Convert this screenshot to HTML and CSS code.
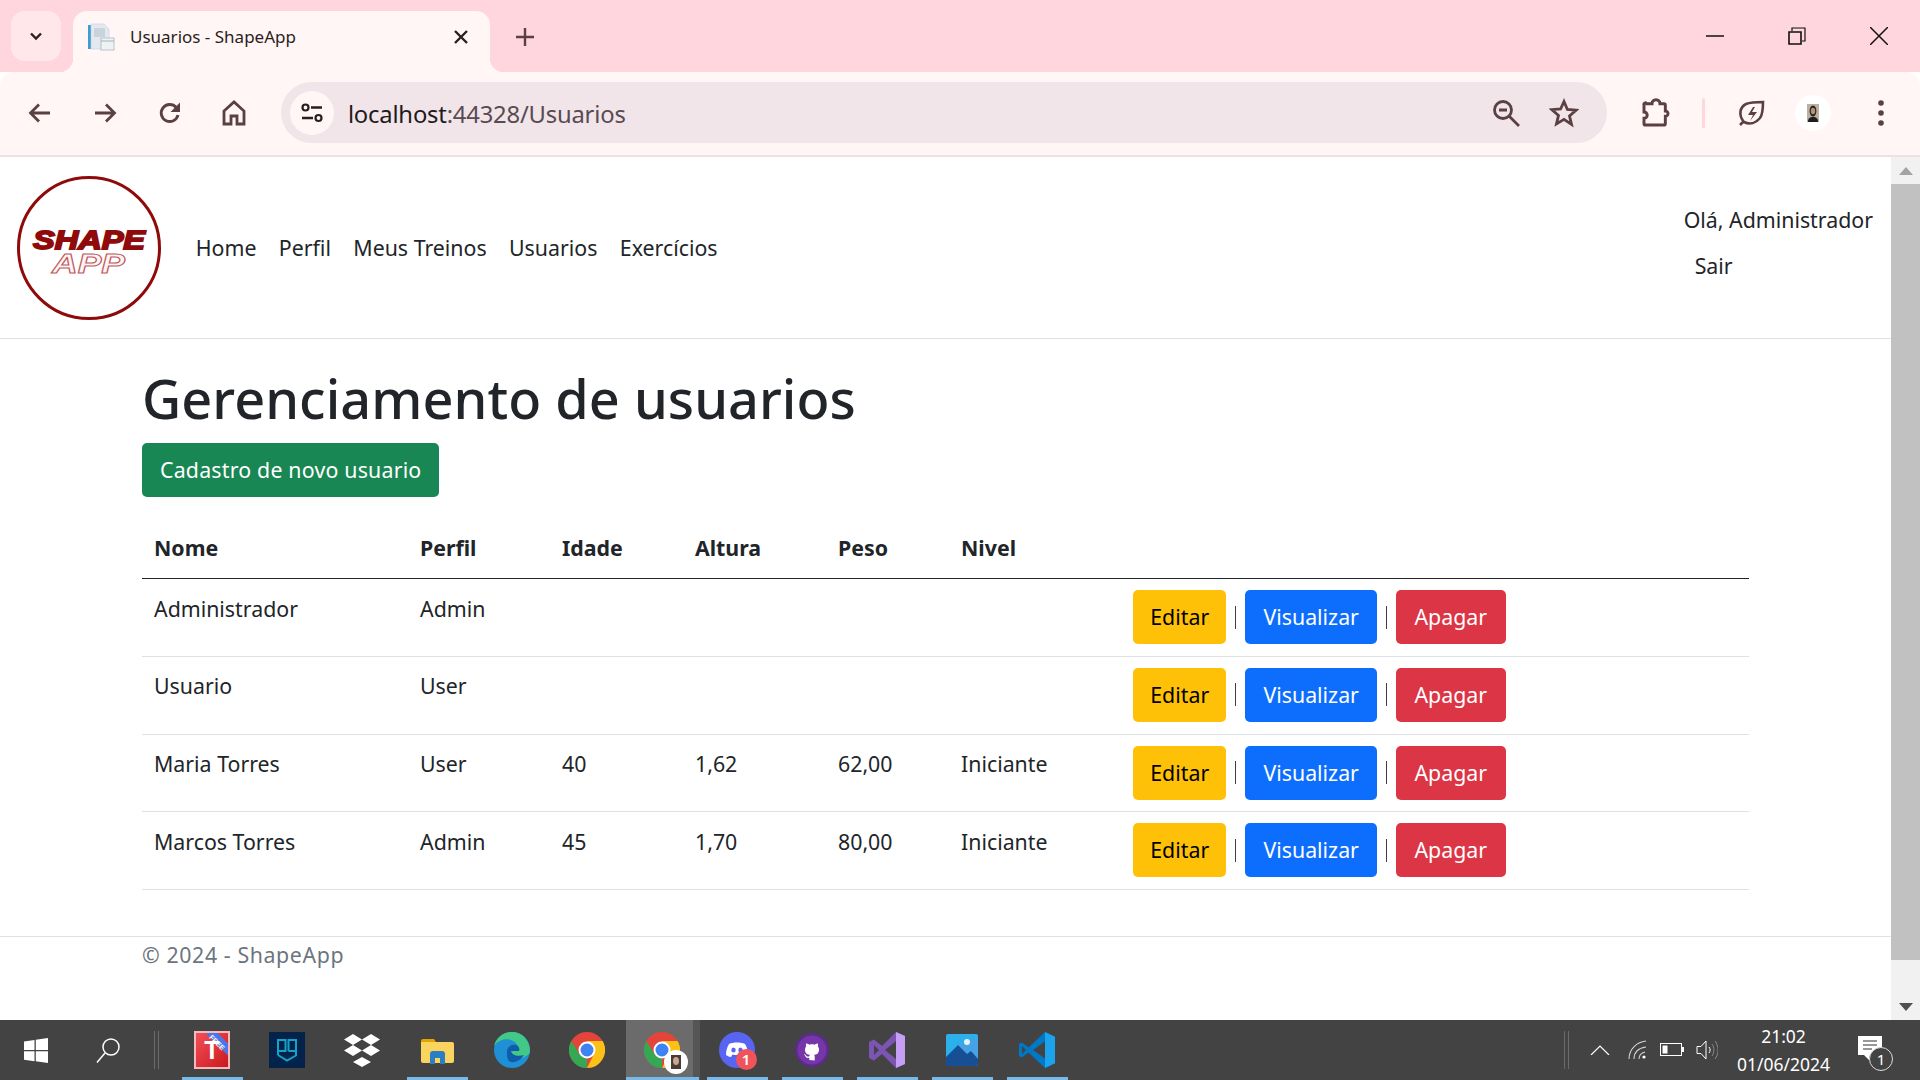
FILE: index.html
```html
<!DOCTYPE html>
<html lang="pt">
<head>
<meta charset="utf-8">
<title>Usuarios - ShapeApp</title>
<link rel="stylesheet" href="styles.css">
</head>
<body>
<div class="screen">
  <div class="tabstrip">
    <div class="tabsearch"><svg width="16" height="16" viewBox="0 0 16 16"><path d="M3 5.500l5 5 5-5" fill="none" stroke="#2b1d20" stroke-width="2.400"/></svg></div>
    <div class="tab">
      <svg class="favicon" width="28" height="28" viewBox="0 0 28 28"><path d="M1 2h3v24H1z" fill="#3f9bd3"/><path d="M4 1h13l5 5v10h-8v10H4z" fill="#e3e9ef" stroke="#c9d2da" stroke-width=".6"/><path d="M7 5h11v9H7z" fill="#c9d3dc"/><rect x="14" y="15" width="13" height="12" fill="#eef2f5" stroke="#b9c3cb"/><path d="M14 18h13" stroke="#9fb0bc"/></svg>
      <span class="tabtitle">Usuarios - ShapeApp</span>
      <svg class="tabclose" width="16" height="16" viewBox="0 0 16 16"><path d="M2 2l12 12M14 2L2 14" stroke="#2b1d20" stroke-width="2.400"/></svg>
    </div>
    <svg class="newtab" width="20" height="20" viewBox="0 0 20 20"><path d="M10 1v18M1 10h18" stroke="#5a3f43" stroke-width="2.400"/></svg>
    <div class="winctl">
      <span class="winbtn"><svg width="18" height="18" viewBox="0 0 18 18"><path d="M0 9h18" stroke="#111" stroke-width="1.500"/></svg></span>
      <span class="winbtn"><svg width="18" height="18" viewBox="0 0 18 18"><path d="M1 5h12v12H1z" fill="none" stroke="#111" stroke-width="1.600"/><path d="M4 4V1h13v13h-3" fill="none" stroke="#111" stroke-width="1.200"/></svg></span>
      <span class="winbtn"><svg width="18" height="18" viewBox="0 0 18 18"><path d="M0 0l18 18M18 0L0 18" stroke="#111" stroke-width="1.500"/></svg></span>
    </div>
  </div>

  <div class="toolbar">
    <span class="tbtn nav"><svg width="24" height="24" viewBox="0 0 24 24"><path d="M22 12H3M11 3.500l-8.500 8.500 8.500 8.500" fill="none" stroke="#5a3f43" stroke-width="2.800"/></svg></span>
    <span class="tbtn nav"><svg width="24" height="24" viewBox="0 0 24 24"><path d="M2 12h19M13 3.500l8.500 8.500-8.500 8.500" fill="none" stroke="#5a3f43" stroke-width="2.800"/></svg></span>
    <span class="tbtn nav"><svg width="24" height="24" viewBox="0 0 24 24"><path d="M20 14a8.500 8.500 0 1 1-1.800-7.500L20 9" fill="none" stroke="#5a3f43" stroke-width="2.900"/><path d="M22 1.500v9.500H12.500z" fill="#5a3f43"/></svg></span>
    <span class="tbtn nav"><svg width="24" height="26" viewBox="0 0 24 26"><path d="M2 11L12 2l10 9v13h-7v-8H9v8H2z" fill="none" stroke="#5a3f43" stroke-width="2.800"/></svg></span>
    <div class="omnibox">
      <span class="siteinfo"><svg width="22" height="22" viewBox="0 0 22 22"><circle cx="4.500" cy="5.500" r="3" fill="none" stroke="#2b1d20" stroke-width="2.200"/><path d="M10 5.500h11M1 16h11" stroke="#2b1d20" stroke-width="2.600"/><circle cx="17.500" cy="16" r="3" fill="none" stroke="#2b1d20" stroke-width="2.200"/></svg></span>
      <span class="url"><b class="urlhost">localhost</b>:44328/Usuarios</span>
      <svg class="omni-zoom" width="28" height="28" viewBox="0 0 28 28"><circle cx="11" cy="11" r="8.500" fill="none" stroke="#5a3f43" stroke-width="2.800"/><path d="M7 11h8M17 17l10 10" stroke="#5a3f43" stroke-width="2.800"/></svg>
      <svg class="omni-star" width="30" height="30" viewBox="0 0 30 30"><path d="M15 3.500l3.400 8 8.600.7-6.500 5.700 2 8.500L15 21.300 7.500 25.900l2-8.500L3 11.700l8.600-.7z" fill="none" stroke="#5a3f43" stroke-width="2.800"/></svg>
    </div>
    <div class="tbright">
      <span class="tbtn"><svg width="32" height="32" viewBox="0 0 24 24"><path d="M5 5h4a3 3 0 0 1 6 0h3a1 1 0 0 1 1 1v4.500a2 2 0 0 1 0 4V20a1 1 0 0 1-1 1H4a1 1 0 0 1-1-1v-4a2.400 2.400 0 0 0 0-4.800V6a1 1 0 0 1 2-1z" fill="none" stroke="#5a3f43" stroke-width="2.200"/></svg></span>
      <span class="tbdiv"></span>
      <span class="tbtn"><svg width="28" height="28" viewBox="0 0 28 28"><path d="M3 26l3-3M7 23C1 16 3 8 9 5c5-2 12-2 17-2 0 5 0 12-3 16-4 5-10 7-16 4z" fill="none" stroke="#5a3f43" stroke-width="2.600"/><path d="M16 8l-5 8h5l-3 6 7-9h-5l3-5z" fill="#5a3f43"/></svg></span>
      <span class="tbtn"><span class="avatar"><svg width="12" height="18" viewBox="0 0 12 18"><rect width="12" height="18" fill="#b9b2a0"/><ellipse cx="6" cy="7" rx="3.400" ry="5.500" fill="#2a2222"/><ellipse cx="6" cy="7" rx="2.200" ry="3.200" fill="#b98f78"/><path d="M1 18c0-4 2-5 5-5s5 1 5 5z" fill="#201c1e"/></svg></span></span>
      <span class="tbtn"><svg width="8" height="28" viewBox="0 0 8 28"><circle cx="4" cy="4" r="2.800" fill="#5a3f43"/><circle cx="4" cy="14" r="2.800" fill="#5a3f43"/><circle cx="4" cy="24" r="2.800" fill="#5a3f43"/></svg></span>
    </div>
  </div>

  <div class="viewport">
    <div class="page">
      <header class="site-head">
        <svg class="logo" width="146" height="146" viewBox="0 0 146 146">
          <circle cx="73" cy="73" r="70.500" fill="#fff" stroke="#8f0a0a" stroke-width="3"/>
          <text class="logo-app" x="36" y="98" textLength="73" lengthAdjust="spacingAndGlyphs">APP</text>
          <text class="logo-shape" x="17" y="74" textLength="112" lengthAdjust="spacingAndGlyphs">SHAPE</text>
        </svg>
        <nav class="main-nav">
          <a>Home</a><a>Perfil</a><a>Meus Treinos</a><a>Usuarios</a><a>Exercícios</a>
        </nav>
        <div class="user-nav">
          <a>Olá, Administrador</a>
          <a class="sair">Sair</a>
        </div>
      </header>

      <main class="content">
        <h1>Gerenciamento de usuarios</h1>
        <a class="btn btn-green">Cadastro de novo usuario</a>
        <table class="grid">
          <colgroup><col class="c1"><col class="c2"><col class="c3"><col class="c4"><col class="c5"><col class="c6"><col></colgroup>
          <thead><tr><th>Nome</th><th>Perfil</th><th>Idade</th><th>Altura</th><th>Peso</th><th>Nivel</th><th></th></tr></thead>
          <tbody>
            <tr><td>Administrador</td><td>Admin</td><td></td><td></td><td></td><td></td><td class="acts"><div class="actrow"><a class="btn btn-yellow">Editar</a><span class="sep"></span><a class="btn btn-blue">Visualizar</a><span class="sep"></span><a class="btn btn-red">Apagar</a></div></td></tr>
            <tr><td>Usuario</td><td>User</td><td></td><td></td><td></td><td></td><td class="acts"><div class="actrow"><a class="btn btn-yellow">Editar</a><span class="sep"></span><a class="btn btn-blue">Visualizar</a><span class="sep"></span><a class="btn btn-red">Apagar</a></div></td></tr>
            <tr><td>Maria Torres</td><td>User</td><td>40</td><td>1,62</td><td>62,00</td><td>Iniciante</td><td class="acts"><div class="actrow"><a class="btn btn-yellow">Editar</a><span class="sep"></span><a class="btn btn-blue">Visualizar</a><span class="sep"></span><a class="btn btn-red">Apagar</a></div></td></tr>
            <tr><td>Marcos Torres</td><td>Admin</td><td>45</td><td>1,70</td><td>80,00</td><td>Iniciante</td><td class="acts"><div class="actrow"><a class="btn btn-yellow">Editar</a><span class="sep"></span><a class="btn btn-blue">Visualizar</a><span class="sep"></span><a class="btn btn-red">Apagar</a></div></td></tr>
          </tbody>
        </table>
      </main>

      <footer class="site-foot"><span>© 2024 - ShapeApp</span></footer>
    </div>
    <div class="scrollbar">
      <span class="sb-arrow"><svg width="14" height="8" viewBox="0 0 14 8"><path d="M7 0l7 8H0z" fill="#a3a3a3"/></svg></span>
      <span class="sb-thumb"></span>
      <span class="sb-arrow"><svg width="14" height="8" viewBox="0 0 14 8"><path d="M7 8L0 0h14z" fill="#505050"/></svg></span>
    </div>
  </div>

  <div class="taskbar">
    <span class="tb-start"><svg width="24" height="25" viewBox="0 0 24 25"><path d="M0 3.500l10.500-1.500v10H0zM11.800 1.800L24 0v12H11.800zM0 13.200h10.500v10L0 21.700zM11.800 13.200H24V25l-12.200-1.800z" fill="#fff"/></svg></span>
    <span class="tb-search"><svg width="24" height="25" viewBox="0 0 24 25"><circle cx="15" cy="9" r="8" fill="none" stroke="#fff" stroke-width="1.500"/><path d="M9 15L1 24.500" stroke="#fff" stroke-width="1.500"/></svg></span>
    <span class="tb-div"></span>
    <div class="tasks">
      <span class="task on"><span class="t-icon"><span class="t-letter">T</span><span class="t-free">FREE</span></span></span>
      <span class="task"><svg width="36" height="36" viewBox="0 0 36 36"><rect width="36" height="36" fill="#03234a"/><path d="M9 23V8h7.500v11H9M19.500 19V8H27v11h-7.500M27 19v5M9 23l9 5.500 9-5" fill="none" stroke="#14a3c7" stroke-width="2"/></svg></span>
      <span class="task"><svg width="36" height="33" viewBox="0 0 36 33"><path d="M9 0l9 5.500-9 5.500-9-5.500zM27 0l9 5.500-9 5.500-9-5.500zM9 11l9 5.500-9 5.500-9-5.500zM27 11l9 5.500-9 5.500-9-5.500zM18 23l9 5-9 5-9-5z" fill="#fff"/></svg></span>
      <span class="task on stacked"><svg width="33" height="28" viewBox="0 0 33 28"><path d="M0 5a2 2 0 0 1 2-2h11l2 3H0z" fill="#e3a500"/><path d="M0 6h31a2 2 0 0 1 2 2v17a2 2 0 0 1-2 2H2a2 2 0 0 1-2-2z" fill="#fbd45d"/><path d="M9 28V18a3 3 0 0 1 3-3h9a3 3 0 0 1 3 3v10h-5v-6h-5v6z" fill="#2a7fc4"/></svg></span>
      <span class="task"><svg width="36" height="36" viewBox="0 0 36 36"><circle cx="18" cy="18" r="18" fill="#1f8fd6"/><path d="M36 19C36 8 28 0 18 0 9 0 2 6 0 14c4-6 11-8 17-6 6 2 8 7 7 11-5 0-7 0-10 1 2 6 8 8 14 6 5-2 8-4 8-7z" fill="#43c987"/><path d="M13 20c0-5 4-8 9-7 3 1 4 4 3 6h-8c1 4 6 6 13 4-4 6-11 9-15 6-2-2-2-5-2-9z" fill="#0f5da8"/></svg></span>
      <span class="task"><svg width="36" height="36" viewBox="0 0 36 36"><use href="#chrome"/></svg></span>
      <span class="task active stacked"><svg width="36" height="36" viewBox="0 0 36 36"><use href="#chrome"/></svg><span class="badge-photo"><svg width="10" height="14" viewBox="0 0 10 14"><rect width="10" height="14" fill="#4a3a38"/><ellipse cx="5" cy="6" rx="3" ry="4" fill="#c9a690"/></svg></span></span>
      <span class="task on"><svg width="36" height="36" viewBox="0 0 36 36"><circle cx="18" cy="18" r="18" fill="#5865f2"/><path d="M10 12c4-2 12-2 16 0 2 3 3 7 3 11-2 1-3 2-5 2l-1.500-2.500c-3 .8-6 .8-9 0L12 25c-2 0-3-1-5-2 0-4 1-8 3-11z" fill="#fff"/><ellipse cx="14.500" cy="18" rx="2.200" ry="2.600" fill="#5865f2"/><ellipse cx="21.500" cy="18" rx="2.200" ry="2.600" fill="#5865f2"/></svg><span class="badge-num">1</span></span>
      <span class="task on"><svg width="34" height="34" viewBox="0 0 34 34"><circle cx="17" cy="17" r="17" fill="#5e2a8c"/><circle cx="17" cy="17" r="14.500" fill="#7436a8"/><g transform="translate(6 6) scale(1.375)"><path d="M6 15.200v-1.500c-2 .4-2.500-.5-2.700-.94-.09-.23-.48-.94-.82-1.130-.28-.15-.68-.52-.01-.53.63-.01 1.080.58 1.230.82.720 1.210 1.870.870 2.330.660.070-.52.280-.87.510-1.070-1.780-.2-3.640-.89-3.640-3.950 0-.87.310-1.590.820-2.150-.08-.2-.36-1.020.080-2.120 0 0 .67-.21 2.200.82.640-.18 1.320-.27 2-.27s1.360.090 2 .27c1.530-1.040 2.200-.82 2.200-.82.440 1.100.160 1.920.080 2.120.510.560.820 1.270.820 2.150 0 3.070-1.870 3.750-3.650 3.950.290.250.540.730.540 1.480v2.700z" fill="#fff"/></g></svg></span>
      <span class="task on"><svg width="36" height="36" viewBox="0 0 36 36"><path d="M0 10l5-2.500 8 6.500L27 0l9 4v28l-9 4-14-14-8 6.500L0 26z" fill="#7b54b4"/><path d="M27 0l9 4v28l-9 4z" fill="#c79ef5"/><path d="M5 13v10l5-5zM16 18l11-9v18z" fill="#434343"/></svg></span>
      <span class="task on stacked"><svg width="32" height="32" viewBox="0 0 32 32"><rect width="32" height="32" rx="2" fill="#2cb0ec"/><path d="M32 4v24H20L12 11z" fill="#5a9ae3" opacity=".6"/><circle cx="21" cy="8" r="3" fill="#e8f4fb"/><path d="M0 32V23L12 11l9 9 4-3 7 8v5a2 2 0 0 1-2 2z" fill="#174f95"/></svg></span>
      <span class="task on"><svg width="36" height="36" viewBox="0 0 36 36"><path d="M26 0l10 4.800v26.400L26 36 9.500 20.500 3 25.500 0 24V12l3-1.500 6.500 5z" fill="#0078c8"/><path d="M26 0l10 4.800v26.400L26 36z" fill="#1ca3ee"/><path d="M26 9.500L14 18l12 8.500zM3 14v8l4-4z" fill="#434343"/></svg></span>
    </div>
    <div class="tray">
      <span class="tb-div"></span>
      <svg class="tray-ic first" width="20" height="10" viewBox="0 0 20 10"><path d="M1 10l9-9 9 9" fill="none" stroke="#fff" stroke-width="1.200"/></svg>
      <svg class="tray-ic" width="20" height="20" viewBox="0 0 20 20"><path d="M1 19C1 9 9 2 18 1M6 19c0-7 5-11 12-12M11 19c0-3 2-6 6-7" fill="none" stroke="#d6d6d6" stroke-width="1.100"/><circle cx="16" cy="17" r="1.600" fill="#fff"/></svg>
      <svg class="tray-ic" width="24" height="14" viewBox="0 0 24 14"><rect x=".5" y=".5" width="21" height="12" fill="none" stroke="#fff"/><rect x="2.500" y="2.500" width="5" height="8" fill="#fff"/><rect x="22" y="4" width="2" height="5" fill="#fff"/></svg>
      <svg class="tray-ic" width="22" height="20" viewBox="0 0 22 20"><path d="M1 6.500h4L10 1v18l-5-5.500H1z" fill="none" stroke="#fff"/><path d="M13 7c1.500 2 1.500 4 0 6" fill="none" stroke="#fff"/><path d="M16 4c2.500 3.500 2.500 8.500 0 12M19 1c4 5 4 13 0 18" fill="none" stroke="#8a8a8a"/></svg>
      <div class="clock"><span>21:02</span><span>01/06/2024</span></div>
      <span class="notif"><svg width="24" height="25" viewBox="0 0 24 25"><path d="M0 0h24v19H12l-1 5-5-5H0z" fill="#fff"/><path d="M5 5h14M5 9h14M5 13h9" stroke="#333" stroke-width="1.200"/></svg><span class="notif-num">1</span></span>
    </div>
  </div>
</div>

<svg class="defs" width="0" height="0"><defs>
  <symbol id="chrome" viewBox="0 0 36 36">
    <circle cx="18" cy="18" r="18" fill="#e4453a"/>
    <path d="M18 36a18 18 0 0 1-15.600-27L11 23l7 4z" fill="#34a853"/>
    <path d="M18 36a18 18 0 0 0 15.600-27H18l7 13z" fill="#fbc116"/>
    <circle cx="18" cy="18" r="8.500" fill="#fff"/><circle cx="18" cy="18" r="6.500" fill="#3f82f1"/>
  </symbol>
</defs></svg>
</body>
</html>
```
FILE: styles.css
```css
* { box-sizing: border-box; }
html, body { margin: 0; padding: 0; height: 100%; overflow: hidden; }
body { font-family: "Noto Sans", "Open Sans", sans-serif; color: #212529; background: #fff; }
a { color: inherit; text-decoration: none; }
.defs { position: absolute; }

.screen { width: 1920px; height: 1080px; display: flex; flex-direction: column; }

/* tab strip */
.tabstrip { height: 72px; flex: none; background: #ffd6de; display: flex; align-items: flex-start; padding: 11px 0 0 11px; }
.tabsearch { width: 50px; height: 50px; border-radius: 14px; background: #ffe7ea; display: flex; align-items: center; justify-content: center; flex: none; }
.tab { width: 417px; height: 61px; margin-left: 12px; background: #fff6f5; border-radius: 14px 14px 0 0; display: flex; align-items: center; padding: 0 21px 10px 14px; position: relative; flex: none; }
.tab::before, .tab::after { content: ""; position: absolute; bottom: 0; width: 14px; height: 14px; }
.tab::before { left: -14px; background: radial-gradient(circle at 0 0, #ffd6de 14px, #fff6f5 14.500px); }
.tab::after { right: -14px; background: radial-gradient(circle at 100% 0, #ffd6de 14px, #fff6f5 14.500px); }
.favicon { flex: none; }
.tabtitle { margin-left: 15px; font-size: 17px; color: #2b1d20; flex: 1; }
.tabclose { flex: none; }
.newtab { margin: 16px 0 0 25px; flex: none; }
.winctl { margin-left: auto; display: flex; padding: 16px 0 0 0; }
.winbtn { width: 82px; height: 18px; display: flex; justify-content: center; }
.winbtn svg { display: block; }

/* toolbar */
.toolbar { height: 85px; flex: none; background: #fff6f5; border-radius: 14px 14px 0 0; border-bottom: 2px solid #f3dfe2; display: flex; align-items: center; padding: 0 6.500px 2px 8px; }
.tbtn { width: 65px; height: 40px; display: flex; align-items: center; justify-content: center; flex: none; }
.tbtn.nav { width: 64.670px; }
.omnibox { flex: 1; height: 61px; margin-left: 14.300px; background: #f1e5e9; border-radius: 31px; display: flex; align-items: center; padding: 0 28px 0 9px; }
.siteinfo { width: 44px; height: 44px; border-radius: 50%; background: #fff6f5; display: flex; align-items: center; justify-content: center; flex: none; }
.url { margin-left: 14px; font-size: 23.800px; color: #5a4a52; flex: 1; letter-spacing: -.2px; padding-top: 2px; }
.urlhost { font-weight: 400; color: #1f1a20; }
.omni-zoom { flex: none; margin-right: 29px; }
.omni-star { flex: none; }
.tbright { display: flex; align-items: center; margin-left: 16.500px; }
.tbdiv { width: 30px; height: 30px; flex: none; display: flex; justify-content: center; }
.tbdiv::before { content: ""; width: 3px; height: 30px; background: #ffd6de; border-radius: 2px; }
.avatar { width: 36px; height: 36px; border-radius: 50%; background: #fff; display: flex; align-items: center; justify-content: center; margin-right: 7px; flex: none; }

/* page */
.viewport { flex: 1; min-height: 0; display: flex; background: #fff; }
.page { flex: 1; min-width: 0; display: flex; flex-direction: column; font-size: 21.330px; line-height: 32px; }
.site-head { height: 182px; flex: none; border-bottom: 1px solid #dee2e6; display: flex; align-items: center; padding: 0 16px; }
.logo { flex: none; }
.logo-shape { font-family: "Liberation Sans", sans-serif; font-weight: 700; font-style: italic; font-size: 26.500px; fill: #8f0a0a; stroke: #8f0a0a; stroke-width: 1.800px; }
.logo-app { font-family: "Liberation Sans", sans-serif; font-weight: 700; font-style: italic; font-size: 27px; fill: #fdf4f4; stroke: #c0575d; stroke-width: 1px; }
.main-nav { display: flex; margin-left: 22.600px; }
.main-nav a { padding: 0 11.200px; }
.user-nav { margin-left: auto; padding-right: 2px; display: flex; flex-direction: column; gap: 14px; margin-top: -10px; }
.sair { padding-left: 11px; }

.content { padding: 27px 0 0 142px; flex: none; display: flex; flex-direction: column; align-items: flex-start; width: 1749px; }
h1 { margin: 0 0 13px; font-size: 54px; line-height: 64px; font-weight: 500; letter-spacing: .05px; }
.btn { display: inline-flex; align-items: center; height: 54px; padding: 0 18px; border-radius: 5px; flex: none; }
.btn-green { background: #198754; color: #fff; letter-spacing: .2px; }
.btn-yellow { background: #ffc107; color: #000; padding: 0 17.250px; }
.btn-blue { background: #0d6efd; color: #fff; padding: 0 18.500px; }
.btn-red { background: #dc3545; color: #fff; padding: 0 18.500px; }

.grid { width: 100%; border-collapse: collapse; table-layout: fixed; margin-top: 18px; }
.c1 { width: 266px; } .c2 { width: 142px; } .c3 { width: 133px; } .c4 { width: 143px; } .c5 { width: 123px; } .c6 { width: 173px; }
th { text-align: left; padding: 17px 12px 14px; font-weight: 700; height: 60px; border-bottom: 1px solid #212529; }
td { padding: 13.500px 12px 0; height: 77.800px; vertical-align: top; border-bottom: 1px solid #dee2e6; }
td.acts { padding: 11px 11px 0; }
.actrow { display: flex; align-items: center; }
.sep { width: 18.500px; height: 23px; flex: none; display: flex; justify-content: center; }
.sep::before { content: ""; width: 1.500px; height: 23px; background: #3a3f44; }

.site-foot { margin-top: 46px; border-top: 1px solid #dee2e6; padding: 2px 142px 0; color: #6c757d; letter-spacing: .6px; }

.scrollbar { width: 29px; flex: none; background: #f1f1f1; display: flex; flex-direction: column; align-items: center; }
.sb-arrow { height: 27px; display: flex; align-items: center; flex: none; }
.sb-thumb { flex: 1; width: 100%; background: #c1c1c1; margin-bottom: 33px; }

/* taskbar */
.taskbar { height: 60px; flex: none; background: #434343; display: flex; align-items: center; color: #fff; padding-right: 8px; }
.tb-start { width: 71px; display: flex; justify-content: center; flex: none; }
.tb-search { width: 66px; display: flex; justify-content: center; flex: none; padding-left: 8px; }
.tb-div { width: 5px; height: 38px; border-left: 1px solid #6a6a6a; border-right: 1px solid #6a6a6a; flex: none; margin-left: 17px; }
.tasks { display: flex; margin-left: 15.500px; height: 60px; flex: none; }
.task { width: 75px; height: 60px; position: relative; display: flex; align-items: center; justify-content: center; flex: none; }
.task.on::after, .task.active::after { content: ""; position: absolute; left: 7px; bottom: 0; height: 3px; width: 61px; background: #76b9ed; }
.task.active::before { content: ""; position: absolute; inset: 0 7px 0 1.500px; background: #6b6b6b; box-shadow: 7px 0 0 #555; }
.task.active > * { position: relative; }
.task.active::after { left: 1.500px; width: 73px; }
.t-icon { width: 36px; height: 38px; background: linear-gradient(45deg, transparent 66%, #4b76e8 66%, #4b76e8 84%, transparent 84%), linear-gradient(135deg, #f25056, #c9191f); border: 2px solid #f7b9b9; position: relative; display: flex; align-items: center; justify-content: center; }
.t-letter { font: 700 25px/1 "Liberation Sans", sans-serif; color: #fff; }
.t-free { position: absolute; top: 5px; right: 0; width: 22px; font: 700 7px/9px "Liberation Sans", sans-serif; color: #fff; text-align: center; transform: rotate(45deg); }
.task .badge-photo { position: absolute; left: 39px; top: 30px; width: 24px; height: 24px; border-radius: 50%; background: #fff; display: flex; align-items: center; justify-content: center; }
.badge-num { position: absolute; left: 36px; top: 28.500px; width: 21px; height: 21px; border-radius: 50%; background: #f0535a; color: #fff; font-size: 15px; line-height: 21px; font-weight: 600; text-align: center; }

.tray { margin-left: auto; display: flex; align-items: center; }
.tray .tb-div { margin: 0 21px 0 0; }
.tray-ic { flex: none; margin-right: 12px; }
.tray-ic.first { margin-right: 18px; }
.clock { display: flex; flex-direction: column; align-items: center; width: 100px; margin-left: 3.500px; font-size: 17.500px; line-height: 28px; }
.notif { position: relative; margin-left: 24.500px; margin-right: 30px; display: block; height: 25px; margin-top: -4px; }
.notif-num { position: absolute; left: 11px; top: 11px; width: 24px; height: 24px; border: 1px solid #ddd; border-radius: 50%; background: #434343; font-size: 15px; line-height: 22px; text-align: center; }
```
